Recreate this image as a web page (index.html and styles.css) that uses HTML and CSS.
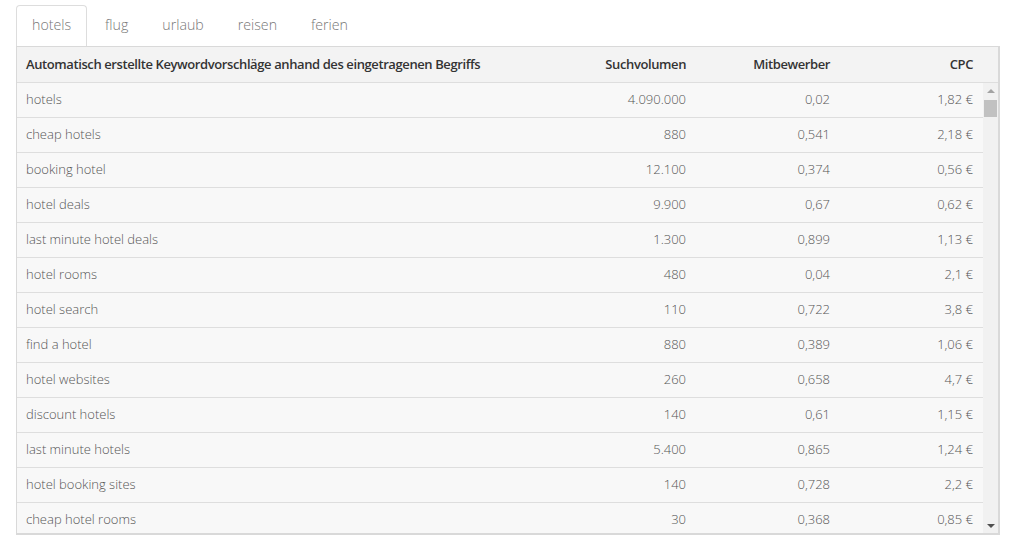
FILE: index.html
```html
<!DOCTYPE html>
<html lang="de">
<head>
<meta charset="utf-8">
<link rel="stylesheet" href="styles.css">
</head>
<body>
<div class="wrap">
  <ul class="tabs">
    <li class="tab active">hotels</li>
    <li class="tab">flug</li>
    <li class="tab">urlaub</li>
    <li class="tab">reisen</li>
    <li class="tab">ferien</li>
  </ul>
  <div class="panel">
    <div class="row head">
      <div class="c1">Automatisch erstellte Keywordvorschläge anhand des eingetragenen Begriffs</div>
      <div class="c2">Suchvolumen</div>
      <div class="c3">Mitbewerber</div>
      <div class="c4">CPC</div>
    </div>
    <div class="body">
      <div class="rows">
        <div class="row"><div class="c1">hotels</div><div class="c2">4.090.000</div><div class="c3">0,02</div><div class="c4">1,82 €</div></div>
        <div class="row"><div class="c1">cheap hotels</div><div class="c2">880</div><div class="c3">0,541</div><div class="c4">2,18 €</div></div>
        <div class="row"><div class="c1">booking hotel</div><div class="c2">12.100</div><div class="c3">0,374</div><div class="c4">0,56 €</div></div>
        <div class="row"><div class="c1">hotel deals</div><div class="c2">9.900</div><div class="c3">0,67</div><div class="c4">0,62 €</div></div>
        <div class="row"><div class="c1">last minute hotel deals</div><div class="c2">1.300</div><div class="c3">0,899</div><div class="c4">1,13 €</div></div>
        <div class="row"><div class="c1">hotel rooms</div><div class="c2">480</div><div class="c3">0,04</div><div class="c4">2,1 €</div></div>
        <div class="row"><div class="c1">hotel search</div><div class="c2">110</div><div class="c3">0,722</div><div class="c4">3,8 €</div></div>
        <div class="row"><div class="c1">find a hotel</div><div class="c2">880</div><div class="c3">0,389</div><div class="c4">1,06 €</div></div>
        <div class="row"><div class="c1">hotel websites</div><div class="c2">260</div><div class="c3">0,658</div><div class="c4">4,7 €</div></div>
        <div class="row"><div class="c1">discount hotels</div><div class="c2">140</div><div class="c3">0,61</div><div class="c4">1,15 €</div></div>
        <div class="row"><div class="c1">last minute hotels</div><div class="c2">5.400</div><div class="c3">0,865</div><div class="c4">1,24 €</div></div>
        <div class="row"><div class="c1">hotel booking sites</div><div class="c2">140</div><div class="c3">0,728</div><div class="c4">2,2 €</div></div>
        <div class="row"><div class="c1">cheap hotel rooms</div><div class="c2">30</div><div class="c3">0,368</div><div class="c4">0,85 €</div></div>
      </div>
      <div class="scrollbar">
        <div class="arrow up"></div>
        <div class="track"><div class="thumb"></div></div>
        <div class="arrow down"></div>
      </div>
    </div>
  </div>
</div>
</body>
</html>
```
FILE: styles.css
```css
html, body {
  margin: 0;
  padding: 0;
  background: #ffffff;
}
body {
  font-family: "Open Sans", "DejaVu Sans", sans-serif;
  font-weight: 300;
  font-size: 13px;
  color: #555;
}
.wrap {
  padding: 5px 24px 0 16px;
}
.tabs {
  list-style: none;
  margin: 0;
  padding: 0;
  display: flex;
  gap: 2px;
  height: 41px;
}
.tab {
  padding: 9px 15px 11px;
  line-height: 20px;
  font-size: 14.2px;
  color: #777;
  border: 1px solid transparent;
  border-bottom: none;
  border-radius: 4px 4px 0 0;
}
.tab.active {
  border-color: #ddd;
  background: #fff;
  height: 41px;
  box-sizing: border-box;
}
.panel {
  border: 1px solid #d9d9d9;
  border-width: 1px 2px 2px 1px;
  background: #f7f7f7;
  height: 489px;
  box-sizing: border-box;
  overflow: hidden;
  display: flex;
  flex-direction: column;
}
.row {
  display: flex;
  height: 35px;
  align-items: center;
  border-bottom: 1px solid #dedede;
  box-sizing: border-box;
  padding-bottom: 2px;
}
.row.head {
  background: #f3f3f3;
  color: #333;
  font-weight: 600;
  letter-spacing: -0.4px;
  padding-right: 15px;
  padding-bottom: 1px;
  flex: none;
  height: 36px;
}
.c1 { flex: 1; padding-left: 9px; white-space: nowrap; }
.c2 { width: 150px; text-align: right; padding-right: 10px; }
.c3 { width: 134px; text-align: right; padding-right: 10px; }
.c4 { width: 133px; text-align: right; padding-right: 10px; }
.body {
  flex: 1;
  display: flex;
  min-height: 0;
}
.rows {
  flex: 1;
  overflow: hidden;
  background: #f8f8f8;
}
.scrollbar {
  width: 15px;
  background: #f1f1f1;
  display: flex;
  flex-direction: column;
}
.arrow {
  height: 15px;
  display: flex;
  align-items: center;
  justify-content: center;
}
.arrow.up::before {
  content: "";
  border-left: 4px solid transparent;
  border-right: 4px solid transparent;
  border-bottom: 4px solid #a3a3a3;
}
.arrow.down::before {
  content: "";
  border-left: 4px solid transparent;
  border-right: 4px solid transparent;
  border-top: 4px solid #505050;
}
.track {
  flex: 1;
  padding: 2px 1px;
}
.thumb {
  height: 17px;
  background: #c1c1c1;
}
```
